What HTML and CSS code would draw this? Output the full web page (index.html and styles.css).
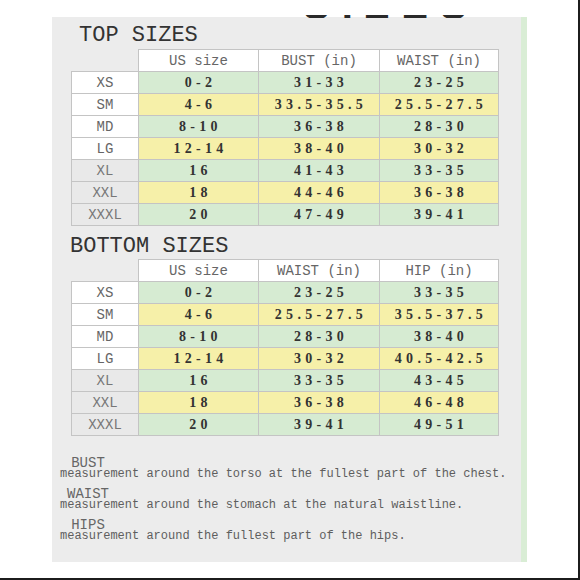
FILE: index.html
```html
<!DOCTYPE html>
<html>
<head>
<meta charset="utf-8">
<link rel="stylesheet" href="styles.css">
</head>
<body>
<div class="page">
  <div class="head-clip" aria-hidden="true"><span>SIZES</span></div>
  <div class="panel">
    <h2 class="title title-top">TOP SIZES</h2>
    <table class="chart">
      <colgroup><col class="c-lbl"><col class="c-us"><col class="c-a"><col class="c-b"></colgroup>
      <thead>
        <tr><th class="blank"></th><th>US size</th><th>BUST (in)</th><th>WAIST (in)</th></tr>
      </thead>
      <tbody>
        <tr class="g"><td class="lbl">XS</td><td>0-2</td><td>31-33</td><td>23-25</td></tr>
        <tr class="y"><td class="lbl">SM</td><td>4-6</td><td>33.5-35.5</td><td>25.5-27.5</td></tr>
        <tr class="g"><td class="lbl">MD</td><td>8-10</td><td>36-38</td><td>28-30</td></tr>
        <tr class="y"><td class="lbl">LG</td><td>12-14</td><td>38-40</td><td>30-32</td></tr>
        <tr class="g"><td class="lbl dim">XL</td><td>16</td><td>41-43</td><td>33-35</td></tr>
        <tr class="y"><td class="lbl dim">XXL</td><td>18</td><td>44-46</td><td>36-38</td></tr>
        <tr class="g"><td class="lbl dim">XXXL</td><td>20</td><td>47-49</td><td>39-41</td></tr>
      </tbody>
    </table>

    <h2 class="title title-bottom">BOTTOM SIZES</h2>
    <table class="chart">
      <colgroup><col class="c-lbl"><col class="c-us"><col class="c-a"><col class="c-b"></colgroup>
      <thead>
        <tr><th class="blank"></th><th>US size</th><th>WAIST (in)</th><th>HIP (in)</th></tr>
      </thead>
      <tbody>
        <tr class="g"><td class="lbl">XS</td><td>0-2</td><td>23-25</td><td>33-35</td></tr>
        <tr class="y"><td class="lbl">SM</td><td>4-6</td><td>25.5-27.5</td><td>35.5-37.5</td></tr>
        <tr class="g"><td class="lbl">MD</td><td>8-10</td><td>28-30</td><td>38-40</td></tr>
        <tr class="y"><td class="lbl">LG</td><td>12-14</td><td>30-32</td><td>40.5-42.5</td></tr>
        <tr class="g"><td class="lbl dim">XL</td><td>16</td><td>33-35</td><td>43-45</td></tr>
        <tr class="y"><td class="lbl dim">XXL</td><td>18</td><td>36-38</td><td>46-48</td></tr>
        <tr class="g"><td class="lbl dim">XXXL</td><td>20</td><td>39-41</td><td>49-51</td></tr>
      </tbody>
    </table>

    <div class="notes">
      <div class="note">
        <div class="note-title">BUST</div>
        <div class="note-desc">measurement around the torso at the fullest part of the chest.</div>
      </div>
      <div class="note">
        <div class="note-title">WAIST</div>
        <div class="note-desc">measurement around the stomach at the natural waistline.</div>
      </div>
      <div class="note">
        <div class="note-title">HIPS</div>
        <div class="note-desc">measurement around the fullest part of the hips.</div>
      </div>
    </div>
  </div>
</div>
</body>
</html>
```

FILE: styles.css
```css
* { box-sizing: border-box; }

html, body {
  margin: 0;
  padding: 0;
  background: #ffffff;
}

.page {
  position: relative;
  width: 580px;
  height: 580px;
  background: #ffffff;
  border-right: 2px solid #1c1c1c;
  border-bottom: 2px solid #1c1c1c;
  padding-top: 17px;
  overflow: hidden;
  font-family: "Liberation Mono", "DejaVu Sans Mono", monospace;
}

.head-clip {
  position: absolute;
  top: 15px;
  left: 303px;
  width: 175px;
  height: 3px;
  overflow: hidden;
  z-index: 2;
}

.head-clip span {
  display: block;
  margin-top: -30px;
  font-family: "Liberation Sans", Arial, sans-serif;
  font-weight: bold;
  font-size: 40px;
  line-height: 40px;
  letter-spacing: 12px;
  color: #2a2a2a;
}

.panel {
  margin-left: 52px;
  width: 475px;
  height: 545px;
  background: #ececec;
  border-right: 6px solid #d9edd5;
  padding-top: 8px;
  display: flex;
  flex-direction: column;
  align-items: flex-start;
}

.title {
  margin: 0;
  font-family: "Liberation Mono", monospace;
  font-weight: normal;
  font-size: 22px;
  line-height: 22px;
  color: #333333;
}

.title-top {
  margin-left: 27px;
  margin-bottom: 2px;
}

.title-bottom {
  margin-left: 18px;
  margin-top: 10px;
  margin-bottom: 1px;
}

.chart {
  margin-left: 19px;
  border-collapse: collapse;
  table-layout: fixed;
  width: 427px;
}

.c-lbl { width: 67px; }
.c-us { width: 120px; }
.c-a { width: 121px; }
.c-b { width: 119px; }

.chart th,
.chart td {
  border: 1px solid #c4c4c4;
  height: 22px;
  padding: 0;
  text-align: center;
  vertical-align: middle;
}

.chart th {
  background: #ffffff;
  font-family: "Liberation Mono", monospace;
  font-weight: normal;
  font-size: 14px;
  color: #666666;
}

.chart th.blank {
  background: transparent;
  border: none;
}

.chart td {
  font-family: "Liberation Serif", "Times New Roman", serif;
  font-weight: bold;
  font-size: 14px;
  letter-spacing: 4.3px;
  padding-left: 4px;
  color: #333333;
}

.chart tr.g td { background: #d6ebd2; }
.chart tr.y td { background: #f6f0a9; }

.chart td.lbl,
.chart tr.g td.lbl,
.chart tr.y td.lbl {
  background: #ffffff;
  font-family: "Liberation Mono", monospace;
  font-weight: normal;
  font-size: 14px;
  letter-spacing: 0;
  padding-left: 0;
  color: #666666;
}

.chart tr.g td.lbl.dim,
.chart tr.y td.lbl.dim {
  background: #e9e9e9;
  color: #777777;
}

.notes {
  margin-top: 21px;
  margin-left: 8px;
  display: flex;
  flex-direction: column;
  gap: 9px;
}

.note-title {
  width: 56px;
  text-align: center;
  font-size: 14px;
  line-height: 12px;
  color: #666666;
}

.note-desc {
  font-size: 12px;
  line-height: 10px;
  color: #5e5e5e;
  white-space: nowrap;
}
```
